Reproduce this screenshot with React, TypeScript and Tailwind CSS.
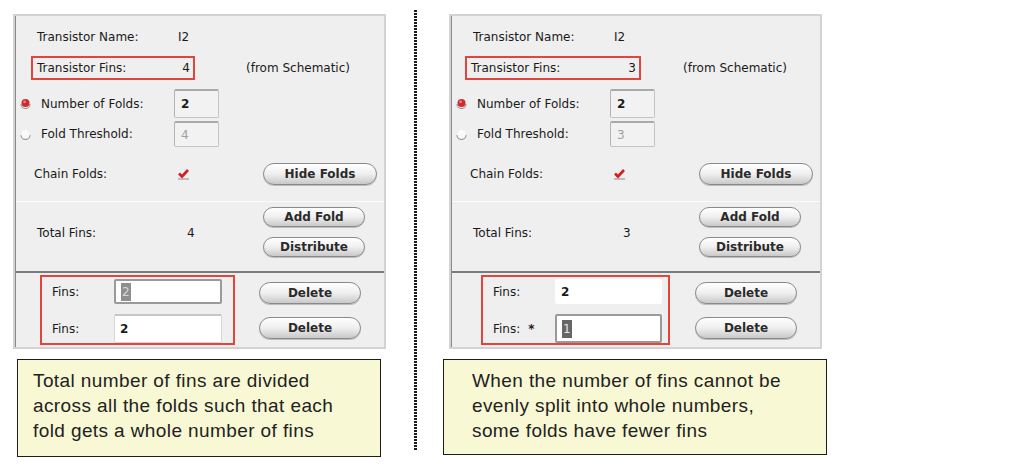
import React from 'react';

const uiFont = "font-['DejaVu_Sans',sans-serif]";

/**
 * Bouton arrondi façon Aqua
 */
const PillButton: React.FC<{ label: string; w: string; h: string }> = ({ label, w, h }) => (
  <div
    className={`${w} ${h} flex items-center justify-center rounded-full border border-[#8a8a8a] bg-gradient-to-b from-[#ffffff] via-[#efefef] to-[#c9c9c9] text-[12px] font-bold text-[#2a2a2a] shadow-[0_1px_0_#bdbdbd]`}
  >
    {label}
  </div>
);

const Radio: React.FC<{ on: boolean }> = ({ on }) => (
  <svg width="11" height="11" viewBox="0 0 11 11">
    <path d="M1 6 A4.5 4.5 0 0 0 10 6" fill="none" stroke="#9a9a9a" strokeWidth="1.2" />
    {on ? (
      <>
        <circle cx="5.5" cy="5" r="4" fill="#d12a2a" />
        <circle cx="4.6" cy="3.8" r="1.4" fill="#f08a8a" />
      </>
    ) : (
      <circle cx="5.5" cy="5" r="4" fill="#fafafa" />
    )}
  </svg>
);

const Check: React.FC = () => (
  <svg width="13" height="12" viewBox="0 0 13 12">
    <path d="M2 5.5 L5 8.5 L11 2" fill="none" stroke="#d91c1c" strokeWidth="2.6" />
    <line x1="1" y1="11" x2="12" y2="11" stroke="#8a8a8a" strokeWidth="1" />
  </svg>
);

const BevelInput: React.FC<{ value: string; dim?: boolean; h: string }> = ({ value, dim, h }) => (
  <div
    className={`w-[45px] ${h} flex items-center pl-[6px] rounded-[2px] border border-[#c4c4c4] border-t-2 border-t-[#a9a9a9] border-l-[#b3b3b3] bg-[#f2f2f2] ${dim ? 'text-[#a0a0a0]' : 'font-bold text-[#1c1c1c]'}`}
  >
    {value}
  </div>
);

interface FinRow {
  value: string;
  selected?: 'light' | 'dark';
  border: 'strong' | 'soft' | 'none';
  star?: boolean;
}

interface PanelProps {
  fins: string;
  finsBoxMl: string;
  finsBoxW: string;
  schemMl: string;
  threshold: string;
  total: string;
  boxMl: string;
  boxW: string;
  inputW: string;
  delMl: string;
  rows: FinRow[];
}

const Panel: React.FC<PanelProps> = (p) => (
  <div className={`w-[373px] h-[335px] border-2 border-[#d3d3d3] bg-[#efefef] ${uiFont} text-[12px] text-[#1a1a1a]`}>
    <div className="h-full border-l border-[#8a8a8a] flex flex-col">
      {/* haut */}
      <div className="h-[186px] border-b border-[#fbfbfb] flex flex-col">
        <div className="mt-[11px] h-[20px] flex items-center pl-[21px]">
          <span className="w-[141px]">Transistor Name:</span>
          <span>I2</span>
        </div>
        <div className="mt-[9px] flex items-center">
          <div className={`${p.finsBoxMl} ${p.finsBoxW} h-[24px] border-2 border-[#e3443c] flex items-center justify-between pl-[4px] pr-[3px]`}>
            <span>Transistor Fins:</span>
            <span>{p.fins}</span>
          </div>
          <span className={p.schemMl}>(from Schematic)</span>
        </div>
        <div className="mt-[9px] h-[29px] flex items-center">
          <span className="ml-[4px] w-[11px] flex"><Radio on /></span>
          <span className="ml-[10px] w-[133px]">Number of Folds:</span>
          <BevelInput value="2" h="h-[29px]" />
        </div>
        <div className="mt-[3px] h-[26px] flex items-center">
          <span className="ml-[4px] w-[11px] flex"><Radio on={false} /></span>
          <span className="ml-[10px] w-[133px]">Fold Threshold:</span>
          <BevelInput value={p.threshold} dim h="h-[26px]" />
        </div>
        <div className="mt-[16px] h-[22px] flex items-center">
          <span className="ml-[18px] w-[143px]">Chain Folds:</span>
          <span className="w-[13px] flex"><Check /></span>
          <div className="ml-[73px]">
            <PillButton label="Hide Folds" w="w-[114px]" h="h-[22px]" />
          </div>
        </div>
      </div>

      {/* milieu */}
      <div className="h-[69px] flex items-start pt-[5px]">
        <span className="mt-[17px] pl-[21px] w-[171px]">Total Fins:</span>
        <span className="mt-[17px] w-[76px]">{p.total}</span>
        <div className="flex flex-col gap-[10px]">
          <PillButton label="Add Fold" w="w-[102px]" h="h-[20px]" />
          <PillButton label="Distribute" w="w-[102px]" h="h-[20px]" />
        </div>
      </div>

      {/* bas */}
      <div className="border-t-2 border-[#7a7a7a] flex-1 flex items-start">
        <div className={`mt-[2px] ${p.boxMl} ${p.boxW} h-[70px] border-2 border-[#e3443c] flex flex-col pl-[10px]`}>
          {p.rows.map((r, i) => (
            <div key={i} className={`${i === 0 ? 'mt-[2px] h-[25px]' : 'mt-[10px] h-[29px]'} flex items-center`}>
              <span className="w-[62px] flex items-center gap-[8px]">
                Fins:
                {r.star && <span className="font-bold text-[12px] leading-none">*</span>}
              </span>
              <div
                className={`${p.inputW} h-full flex items-center pl-[5px] bg-white rounded-[2px] ${
                  r.border === 'strong'
                    ? 'border-2 border-[#9a9a9a]'
                    : r.border === 'soft'
                    ? 'border border-[#d6d6d6] border-t-2 border-t-[#c6c6c6]'
                    : 'border border-white'
                }`}
              >
                <span
                  className={
                    r.selected === 'light'
                      ? 'bg-[#8f8f8f] text-[#d8d8d8] px-[1px]'
                      : r.selected === 'dark'
                      ? 'bg-[#666666] text-[#e6e6e6] px-[1px]'
                      : 'font-bold'
                  }
                >
                  {r.value}
                </span>
              </div>
            </div>
          ))}
        </div>
        <div className={`${p.delMl} mt-[9px] flex flex-col gap-[13px]`}>
          <PillButton label="Delete" w="w-[102px]" h="h-[22px]" />
          <PillButton label="Delete" w="w-[102px]" h="h-[22px]" />
        </div>
      </div>
    </div>
  </div>
);

const Note: React.FC<{ lines: string[]; w: string; h: string; pl: string }> = ({ lines, w, h, pl }) => (
  <div className={`${w} ${h} border border-[#1e1e1e] bg-[#f8f8d4] ${pl} pt-[8px] font-['Liberation_Sans',Arial,sans-serif] text-[19px] tracking-[0.4px] leading-[25px] text-[#222222]`}>
    {lines.map((l) => (
      <div key={l}>{l}</div>
    ))}
  </div>
);

export default function App() {
  return (
    <div className="w-[1014px] h-[471px] bg-white flex items-start">
      <div className="ml-[13px] mt-[14px] flex flex-col">
        <Panel
          fins="4"
          finsBoxMl="ml-[15px]"
          finsBoxW="w-[164px]"
          schemMl="ml-[51px]"
          threshold="4"
          total="4"
          boxMl="ml-[24px]"
          boxW="w-[195px]"
          inputW="w-[108px]"
          delMl="ml-[24px]"
          rows={[
            { value: '2', selected: 'light', border: 'strong' },
            { value: '2', border: 'soft' },
          ]}
        />
        <div className="mt-[10px] ml-[4px]">
          <Note
            w="w-[364px]"
            h="h-[98px]"
            pl="pl-[15px]"
            lines={[
              'Total number of fins are divided',
              'across all the folds such that each',
              'fold gets a whole number of fins',
            ]}
          />
        </div>
      </div>

      <div className="ml-[28px] mt-[10px] w-[3px] h-[440px] bg-[repeating-linear-gradient(to_bottom,#1a1a1a_0px,#1a1a1a_2px,transparent_2px,transparent_3px)]" />

      <div className="ml-[26px] mt-[14px] flex flex-col">
        <div className="ml-[6px]">
          <Panel
            fins="3"
            finsBoxMl="ml-[13px]"
            finsBoxW="w-[176px]"
            schemMl="ml-[42px]"
            threshold="3"
            total="3"
            boxMl="ml-[29px]"
            boxW="w-[189px]"
            inputW="w-[107px]"
            delMl="ml-[25px]"
            rows={[
              { value: '2', border: 'none' },
              { value: '1', selected: 'dark', border: 'strong', star: true },
            ]}
          />
        </div>
        <div className="mt-[10px]">
          <Note
            w="w-[384px]"
            h="h-[96px]"
            pl="pl-[28px]"
            lines={[
              'When the number of fins cannot be',
              'evenly split into whole numbers,',
              'some folds have fewer fins',
            ]}
          />
        </div>
      </div>
    </div>
  );
}
